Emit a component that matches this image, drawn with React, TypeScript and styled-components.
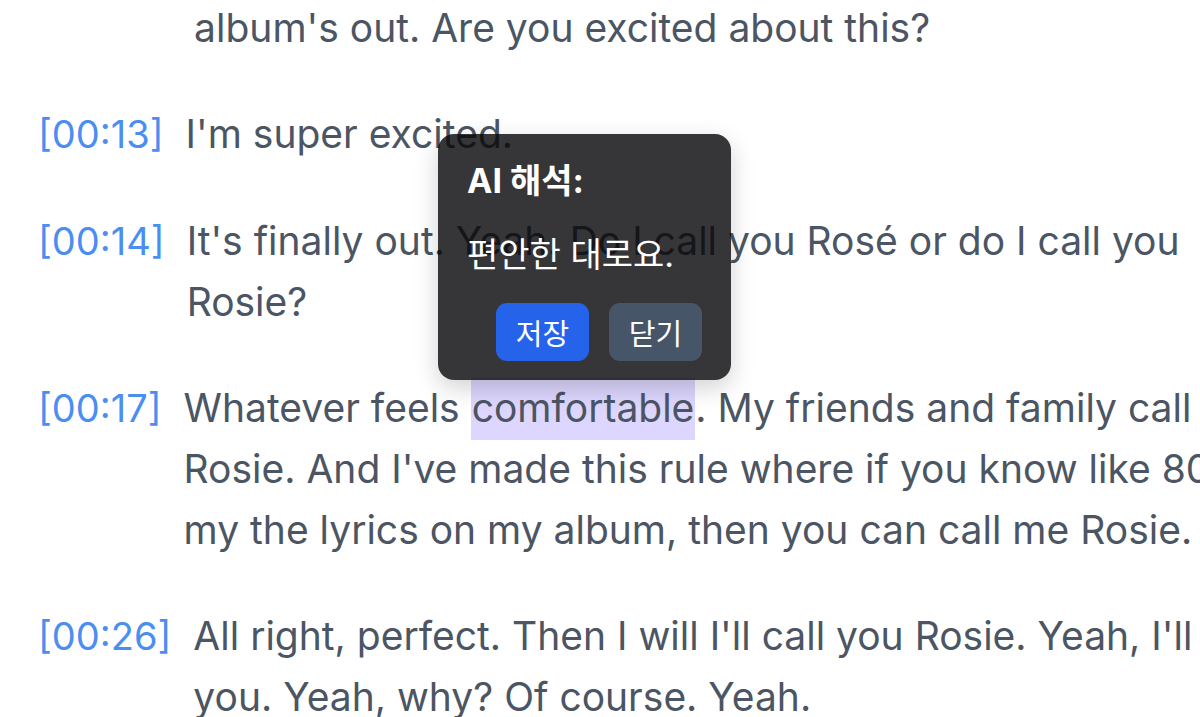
import React from "react";
import styled, { createGlobalStyle } from "styled-components";

const GlobalStyle = createGlobalStyle`
  html, body {
    margin: 0;
    padding: 0;
    background: #ffffff;
    overflow: hidden;
  }
  body {
    font-family: Inter, "Noto Sans", "Noto Sans CJK KR", sans-serif;
  }
`;

const Page = styled.div`
  position: relative;
  width: 1200px;
  height: 717px;
  overflow: hidden;
`;

const Transcript = styled.div`
  box-sizing: border-box;
  width: 1303px;
  padding: 0 0 0 38px;
  margin-top: -64px;
  display: flex;
  flex-direction: column;
  gap: 45px;
  color: #4b5563;
  font-size: 39px;
  line-height: 61px;
`;

const Row = styled.div`
  display: flex;
  align-items: baseline;
  gap: 22px;
`;

const Time = styled.span`
  flex: none;
  color: #4b8ef2;
  font-size: 38px;
`;

const Line = styled.p`
  flex: 1;
  margin: 0;
`;

const Mark = styled.span`
  background: #ddd6fe;
  padding: 6px 1px 9px;
`;

const Popup = styled.div`
  position: absolute;
  left: 438px;
  top: 134px;
  width: 293px;
  box-sizing: border-box;
  padding: 27px 29px 19px;
  border-radius: 16px;
  background: rgba(8, 8, 10, 0.81);
  box-shadow: 0 8px 24px rgba(0, 0, 0, 0.18);
  color: #ffffff;
  font-family: Inter, "Noto Sans CJK KR", sans-serif;
  font-size: 34px;
  line-height: 40px;
`;

const Title = styled.div`
  font-weight: 700;
`;

const Body = styled.div`
  margin-top: 34px;
`;

const Actions = styled.div`
  display: flex;
  justify-content: flex-end;
  gap: 20px;
  margin-top: 28px;
`;

const Button = styled.button<{ $primary?: boolean }>`
  width: 93px;
  height: 58px;
  border: none;
  border-radius: 11px;
  background: ${(p) => (p.$primary ? "#2563eb" : "#475569")};
  color: #ffffff;
  font-family: Inter, "Noto Sans CJK KR", sans-serif;
  font-size: 29px;
  padding: 0;
`;

const rows: { time: string; text: React.ReactNode }[] = [
  {
    time: "[00:08]",
    text: "Hi Rosé, thank you so much for joining us. Congrats, your album's out. Are you excited about this?",
  },
  { time: "[00:13]", text: "I'm super excited." },
  {
    time: "[00:14]",
    text: "It's finally out. Yeah. Do I call you Rosé or do I call you Rosie?",
  },
  {
    time: "[00:17]",
    text: (
      <>
        Whatever feels <Mark>comfortable</Mark>. My friends and family call me
        Rosie. And I've made this rule where if you know like 80% of my the
        lyrics on my album, then you can call me Rosie.
      </>
    ),
  },
  {
    time: "[00:26]",
    text: "All right, perfect. Then I will I'll call you Rosie. Yeah, I'll call you. Yeah, why? Of course. Yeah.",
  },
];

export default function App() {
  return (
    <>
      <GlobalStyle />
      <Page>
        <Transcript>
          {rows.map((r) => (
            <Row key={r.time}>
              <Time>{r.time}</Time>
              <Line>{r.text}</Line>
            </Row>
          ))}
        </Transcript>
        <Popup>
          <Title>AI 해석:</Title>
          <Body>편안한 대로요.</Body>
          <Actions>
            <Button $primary>저장</Button>
            <Button>닫기</Button>
          </Actions>
        </Popup>
      </Page>
    </>
  );
}
